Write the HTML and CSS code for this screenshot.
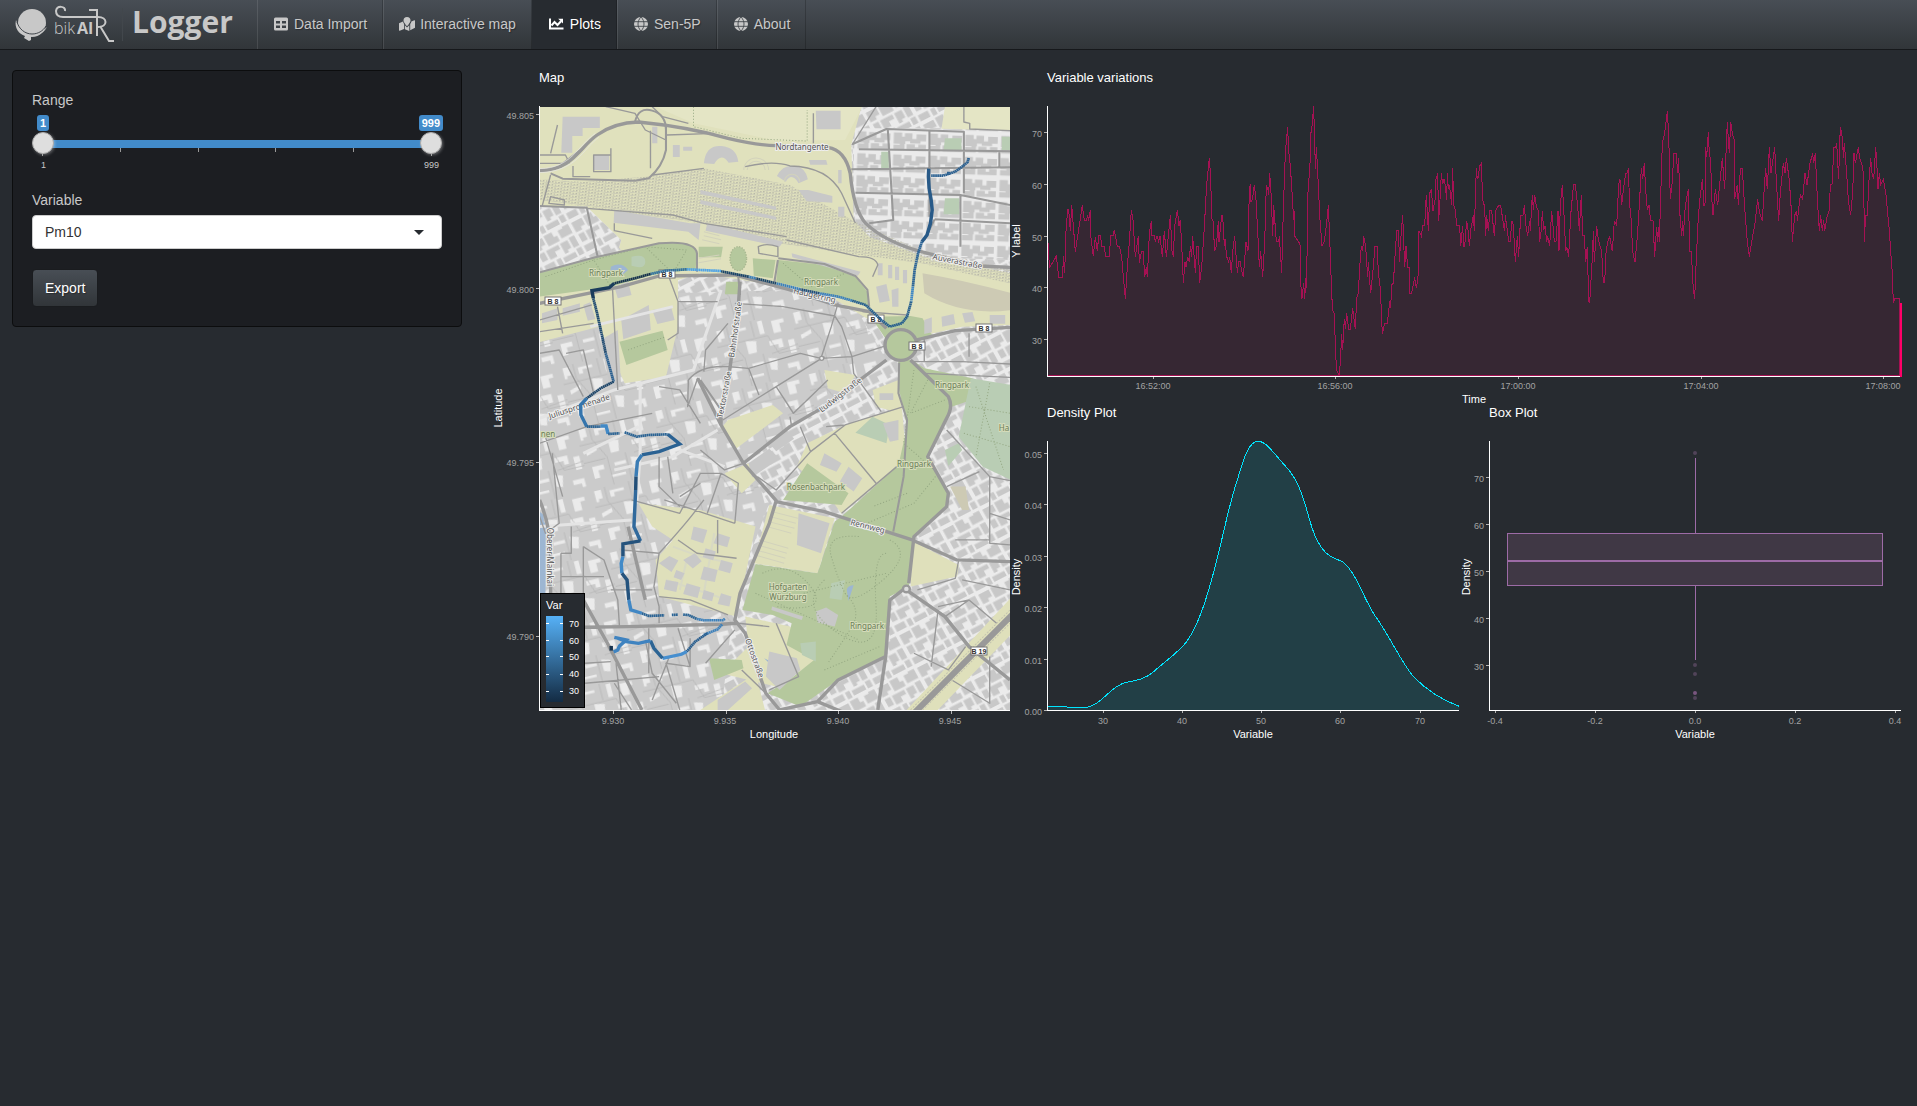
FILE: index.html
```html
<!DOCTYPE html>
<html lang="en">
<head>
<meta charset="utf-8">
<meta name="viewport" content="width=device-width, initial-scale=1">
<title>bikAIR Logger</title>
<link rel="stylesheet" href="styles.css">
</head>
<body>
<header class="navbar">
  <a class="brand" href="#">
    <svg class="brand-logo" width="124" height="49" viewBox="0 0 124 49" role="img" aria-label="bikAIR">
      <circle cx="32" cy="23" r="14" fill="#c8c8c8"/>
      <path d="M16 20c-2 8 3 14 9 16l-1 2 5 3 2-1v-4c7 0 13-3 16-9-5 5-10 7-15 6-8-1-14-6-16-13z" fill="#c8c8c8"/>
      <path d="M17 22c2 7 8 12 15 12 6 0 11-3 14-8" fill="none" stroke="#41464c" stroke-width="1"/>
      <path d="M65 11c1-5-8-6-9 0 0 4 3 6 7 6h35c10 0 10 10 0 10h-1M100 26l9 15h5" fill="none" stroke="#c8c8c8" stroke-width="2"/>
      <path d="M89 10h8v26" fill="none" stroke="#c8c8c8" stroke-width="2"/>
      <text class="logo-thin" x="54" y="34">bik</text>
      <text class="logo-bold" x="77" y="34">AI</text>
      <path d="M122.500 8v33" stroke="#42474c"/>
    </svg>
    <span class="brand-name">Logger</span>
  </a>
  <nav class="nav" aria-label="Main">
    <a href="#"><svg width="16" height="14" viewBox="0 0 16 14"><path fill="currentColor" fill-rule="evenodd" d="M2.500.500h11a1.500 1.500 0 0 1 1.500 1.500v10a1.500 1.500 0 0 1-1.500 1.500h-11A1.500 1.500 0 0 1 1 12V2A1.500 1.500 0 0 1 2.500.500zM3 4v2.500h4V4zM9 4v2.500h4V4zM3 8.500V11h4V8.500zM9 8.500V11h4V8.500z"/></svg>Data Import</a>
    <a href="#"><svg width="16" height="14" viewBox="0 0 16 14"><path fill="currentColor" d="M8 0a3.500 3.500 0 0 0-3.500 3.500C4.500 5.200 7 8.200 8 9.200c1-1 3.500-4 3.500-5.700A3.500 3.500 0 0 0 8 0zM0 6.200 4 4.500c.2 1 .7 2 1.100 2.600V12L.7 13.800 0 13.500zM5.900 8.300 8 10.500l2.300-2.300V14L5.900 12.200zM11.200 7c.7-1 1.100-1.700 1.200-2.500L15.300 3.200l.7.300v7.300l-4.800 2.500z"/></svg>Interactive map</a>
    <a class="active" href="#" aria-current="page"><svg width="17" height="14" viewBox="0 0 17 14"><path fill="none" stroke="currentColor" stroke-width="2" d="M2 1.500v10h13.500"/><path fill="none" stroke="currentColor" stroke-width="2" d="M3.500 8.500 6.500 5l3 3L13 4.200"/><path fill="currentColor" d="M10.200 1.800h4.800v4.800z"/></svg>Plots</a>
    <a href="#"><svg width="16" height="14" viewBox="0 0 16 14"><circle cx="8" cy="7" r="7" fill="currentColor"/><path fill="none" stroke="#40454a" stroke-width=".9" d="M1 4.700h14M1 9.300h14M8 0c-4 4-4 10 0 14M8 0c4 4 4 10 0 14"/></svg>Sen-5P</a>
    <a href="#"><svg width="16" height="14" viewBox="0 0 16 14"><circle cx="8" cy="7" r="7" fill="currentColor"/><path fill="none" stroke="#40454a" stroke-width=".9" d="M1 4.700h14M1 9.300h14M8 0c-4 4-4 10 0 14M8 0c4 4 4 10 0 14"/></svg>About</a>
  </nav>
</header>

<main class="page">
  <form class="panel">
    <label for="range-from">Range</label>
    <div class="slider">
      <div class="bubbles"><output for="range-from">1</output><output for="range-to">999</output></div>
      <div class="rail">
        <input id="range-from" type="range" min="1" max="999" value="1">
        <input id="range-to" type="range" min="1" max="999" value="999" aria-label="Range end">
      </div>
      <div class="ticks"><i></i><i></i><i></i><i></i><i></i><i></i></div>
      <div class="limits"><span>1</span><span>999</span></div>
    </div>
    <label for="variable">Variable</label>
    <div class="select">
      <select id="variable"><option>Pm10</option></select>
    </div>
    <button class="btn" type="button">Export</button>
  </form>

  <section class="plots">
    <figure class="plot map">
      <figcaption>Map</figcaption>
      <svg viewBox="0 0 528 659">
        <defs>
          <clipPath id="frame"><rect x="56" y="21" width="470" height="603"/></clipPath>
          <linearGradient id="ramp" x1="0" y1="0" x2="0" y2="1"><stop offset="0" stop-color="#56b1f7"/><stop offset="1" stop-color="#132b43"/></linearGradient>
          <pattern id="houses" width="130" height="110" patternUnits="userSpaceOnUse" patternTransform="rotate(-28)">
            <path fill="#c8c8c8" d="M4,6h34v22h-14v10h-20z M44,4h26v16h10v18h-36z M88,8h16v-4h20v30h-36z M6,46h18v26h-18z M30,46h40v14h-18v16h-22z M76,46h24v26h-12v8h-12z M106,42h18v34h-18z M4,84h32v20h-32z M44,84h14v22h-14z M64,88h40v16h-40z M110,82h16v22h-16z"/>
          </pattern>
          <pattern id="grid" width="104" height="66" patternUnits="userSpaceOnUse" patternTransform="translate(1092 274) rotate(2)">
            <path fill="#c8c8c8" d="M4,5h24v12h8v-10h22v16h12v-14h28v20h-16v8h-30v-6h-14v8h-34z M4,42h18v-6h14v22h-32z M42,40h24v8h10v-8h22v18h-56z"/>
          </pattern>
          <pattern id="dense" width="230" height="190" patternUnits="userSpaceOnUse" patternTransform="rotate(-14)">
            <rect width="230" height="190" fill="#cbcbcb"/>
            <path fill="#ebebeb" d="M8,6h20v26h-12v8h-8z M52,14h42v8h-30v12h-12z M130,6h14v40h-14z M170,14h36v12h-14v26h-22z M14,76l32,-10v12l-32,10z M84,56l30,6 -6,34h-24z M150,72h38v26h-14v-12h-24z M204,82h18v40h-18z M20,124h34v14h-18v22h-16z M86,126h34v10h-34z M136,120l26,8 -8,34 -18,-6z M70,160h42v8h-42z M186,150h34v26h-10v-12h-24z"/>
            <path fill="none" stroke="#b4b4b4" stroke-width="2" d="M0,54h150l20,60h60M40,0v44l30,60v86M112,0v50M0,108h64M124,104v86M150,110L230,100"/>
          </pattern>
          <pattern id="tracks" width="9" height="9" patternUnits="userSpaceOnUse" patternTransform="rotate(7)">
            <path stroke="#b2b2a6" stroke-width="3" stroke-dasharray="5 4" d="M0,4h9"/>
            <path stroke="#c5c5b4" stroke-width="2" d="M0,8h9"/>
          </pattern>
        </defs>
        <g clip-path="url(#frame)">
          <g class="land" transform="translate(-4 -26) scale(.3444 .3333)">
            <path fill="#ebebeb" d="M160,130H1545V1960H160z"/>
            <path fill="url(#houses)" d="M160,130H1545V1960H160z"/>
            <path fill="#ebebeb" d="M1080,205H1545V600L1290,590 1090,500z"/>
            <path fill="url(#grid)" d="M1080,205H1545V600L1290,590 1090,500z"/>
            <path fill="url(#dense)" d="M160,780L560,700 900,690 1100,760 1180,900 900,1100 765,1210 840,1330 740,1600 700,1960H160z"/>
            <path fill="#e0e1bd" d="M160,130H1110L1078,255 1085,480 1130,530 1290,590 1545,640V795L1400,800 1270,830 1180,810 1000,700 640,640 575,660 575,800 540,950 420,970 390,900 345,800 160,850V640L410,570 330,480 310,440H160z"/>
            <path fill="#e4e5c5" d="M510,140H1110L1060,240 860,242 620,190z M1350,140H1545V212L1340,206z"/>
            <path fill="#ebebeb" d="M160,440H310L410,540 400,575 160,640z"/><path fill="url(#houses)" d="M160,440H310L410,540 400,575 160,640z"/>
            <path fill="#dfe0bb" d="M720,1080L850,1035 880,1060 745,1165 700,1105z M460,1330L640,1350 800,1400 745,1670 520,1610 510,1500 560,1440 500,1400z M950,1150L1060,1095 1225,1040 1238,1200 1050,1362 1000,1290 920,1220z M840,1335L1030,1375 980,1540 795,1510z M1000,930L1090,945 1060,1000 1010,985z M1140,990L1215,960 1225,1060 1150,1040z M1258,1445L1390,1515 1385,1550 1250,1580z M770,1670L900,1700 980,1800 860,1880 700,1840 780,1760z M640,1950L800,1840 830,1960z M1230,1960L1545,1610V1720L1320,1960z M710,1240L780,1210 800,1260 760,1300z M160,1340L185,1400V1600H160z"/>
            <path fill="#cdcab4" d="M1285,640Q1400,660 1545,700V750Q1400,770 1290,700z M1365,1280h45l10,70h-20z"/>
            <path fill="#b5c89d" d="M160,640L335,590 520,550Q620,545 630,575L626,628 500,645 380,680 160,712z M635,560h70l-5,32h-65z M792,595l66,5 -8,55 -55,-8z M866,600L1000,615 1090,650 1128,700 1130,740 1060,715 860,665z M715,665h36v38h-40z M1135,770L1250,768 1285,775 1312,825 1265,850 1180,840z M405,845L530,812 545,870 425,915z M1215,900L1255,900 1290,925 1430,955 1412,1025 1370,1040 1300,1190 1360,1300 1355,1335 1260,1430 1255,1500 1245,1580 1190,1610 1178,1790 1040,1860 930,1940 835,1900 910,1850 970,1800 890,1755 905,1690 850,1665 762,1650 800,1512 980,1540 1030,1385 1050,1370 1215,1215 1240,1100 1215,980z M950,1210L1070,1300 1050,1335 880,1320z M665,1795L760,1800 765,1825 680,1860z"/>
            <ellipse cx="750" cy="596" rx="24" ry="36" fill="#b5c89d" stroke="#a8b790" stroke-width="4" stroke-dasharray="4 4"/>
            <path fill="#b9cdb4" d="M1425,955L1545,975V1262L1460,1220 1390,1130z M1140,1070L1190,1095 1180,1150 1090,1118z M1350,235h48v38h-52z M1350,415h42v48h-46z M1165,275h22v50h-22z M1515,230h30v40h-30z M440,590q40,-10 40,15t-40,12z M1350,1170l40,-20 10,20 -40,48z M1020,1570l40,-10 -10,60 -35,-5z M930,1750l45,-5v60l-40,-20z"/>
            <path fill="#9db6d2" d="M160,1388H190V1600H160z M380,620q30,-16 50,10l-20,18q-10,-20 -32,-10z M1065,1590q0,-12 20,-15l-15,48z M825,1795l50,25 -25,0z M160,1345l25,20v25h-25z"/>
            <path fill="url(#tracks)" d="M173,358L300,366 500,348 650,325 900,375 1080,480 1280,570 1545,630V672L1280,610 850,548 640,490 173,420z"/>
            <path fill="#c8c8c8" d="M240,170h108v34h-50v24h-30v50h-32z M390,450L610,490 640,490 635,540 605,515 388,488z M650,310Q655,255 700,258 745,262 750,305L722,308Q700,275 680,312z M862,348Q880,312 915,318 945,322 952,358L925,370Q905,335 888,365z M640,390L860,440V450L640,402z M640,420L860,470v10L640,432z M660,490L880,545 870,560 655,512z M925,390h28l70,18v20l-75,-5z M975,152h72v56h-70z M905,580l200,55 -8,12 -190,-55z M410,780l80,-45 6,75 -80,28z M500,750l55,-10 10,40 -50,12z M350,840l50,-30 10,170 -35,-10z M848,1640l90,30 -4,10 -88,-30z M975,1655l30,-12 35,22 -10,35 -50,-12z M840,1775l80,20 10,35 -60,60 -40,-40z M925,1360l90,30 -25,90 -70,-25z M690,1920l80,-55 20,20 -70,65h-30z M390,680l40,-15 10,40 -40,10z"/>
            <path fill="#c8c8c8" d="M180,760l45,-15v35l-45,10z M240,745l50,-15v25l-50,12z M300,735l20,-8 15,50 -22,5z M1290,780l22,-8v45l-22,5z M1340,770l35,-8 5,30 -38,8z M1400,760l30,-4 8,28 -30,4z M1480,765h45v26h-45z M1150,680l30,-8 10,50 -30,6z M1195,690l20,-6v56h-18z M1000,1180l50,30 -15,25 -48,-20z M1070,1220l40,35 -25,40 -40,-30z M1160,1000h40v20h-40z M1170,1090l45,-10v60l-25,5z M500,200h15v50h-15z M330,285h45v45h-45z M560,255h20v36h-20z M590,260h26v12h-26z M955,300h50l4,14h-50z M1040,330h10v40h-10z M1040,440h18v30h-18z M1155,610h14v36h-14z M1185,615h12v40h-12z M1205,620h12v40h-12z M1228,630h12v40h-12z"/>
            <path fill="none" stroke="#d2d2bc" stroke-width="3" d="M848,1355l75,20M842,1370l75,20M838,1385l75,20M834,1400l70,20M810,1440l85,25M806,1455l85,25M802,1470l85,25M798,1485l85,25M776,330a26,26 0 0 1 52,0M766,330a36,36 0 0 1 72,0M884,365a22,22 0 0 1 44,0M650,515l45,12M650,527l50,12M645,539l50,12M635,595l60,-10M635,608l65,-12"/>
            <path fill="none" stroke="#d8d9c4" stroke-width="6" d="M560,1460l80,30 90,20M600,1500l-20,90M680,1420l-30,180M540,1560l180,60"/>
            <path fill="#c8c8c8" d="M520,1510l30,-22 26,14 -20,34zM590,1500l34,-20 20,24 -26,22zM540,1560l36,6 -6,30 -36,-8zM650,1520l40,10 -8,36 -42,-8zM600,1570l40,12 -8,32 -42,-12zM690,1420l36,12 -8,30 -40,-12zM700,1600l30,10 -6,30 -34,-8zM620,1400l40,10 -12,40 -36,-12zM570,1530l24,10 -10,20 -22,-8zM655,1465l30,10 -8,26 -30,-10zM700,1500l34,10 -8,30 -34,-10zM650,1590l30,10 -6,24 -30,-8zM780,1210l60,-44 30,30 -80,56zM840,1150l50,-40 22,26 -52,38z"/>
            <path class="footway" d="M190,650L330,600 380,680M330,600L480,560 560,640M480,560L600,570 560,640M880,610L960,680 1060,640M1260,930L1230,1150 1330,1240 1260,1330 1100,1400M1300,960L1250,1060 1350,1020M1240,1300L1140,1340M1100,1430Q1000,1420 1020,1490T1060,1600 1170,1560 1190,1440M1000,1560Q920,1640 1040,1720T1150,1640 1180,1480M820,1540Q900,1500 960,1580T860,1640M1060,1600Q1110,1650 1080,1700T1010,1810M940,1600L1180,1540M800,1600L1100,1740M430,870L540,830M1440,980L1520,1230M1420,1040L1539,1060M1405,1120L1539,1160M1480,970L1440,1190M620,140V200L760,235 950,243V150M1000,1830L1160,1760"/>
            <path class="street pale" d="M173,1075L390,990 620,930 700,690M465,970V1180L455,1330M390,1230L560,1190 690,1110M580,1170L710,1220M320,800L560,740M173,1400L440,1380M300,1180L460,1100"/>
            <path class="street" d="M173,285h75l12,25M205,280L225,195M173,310L240,310 290,270M270,318V350h50M205,345L180,440M495,212V325M502,345L650,325M543,225L680,220M365,140L450,160 480,210 540,240M500,140L530,170 605,190M968,250V160M1080,255L1150,140M1405,140V186L1422,190V207L1539,212M380,265V335H330V285H380M770,320Q850,300 900,318 1010,320 1050,400L1090,490M205,410L245,420V435L200,430zM310,445L560,465 650,490 890,530M890,540L1100,590Q1150,590 1155,615L1140,650M390,490V512L500,535M808,560Q830,548 865,560V590L810,580z"/>
            <path class="street" d="M550,655L575,725H690M575,725V820L545,840M173,815L330,790M225,740L240,820M173,780L325,735M740,730L880,740 1030,768 1050,800 1080,890 1200,850M1040,728L1020,800 990,895 1080,890M650,935L655,870 720,790M605,960Q640,915 720,920L780,925 930,880 990,895M780,925L810,1005M705,1080L860,980 1000,890M860,980L910,1060 1010,960M605,960L603,1040 632,955 660,990M520,980L580,990 640,1090M173,1150L310,1100 500,1060M190,1130L240,1310M300,1010L230,870 173,880M250,880L300,870 330,1000M385,690L400,990M1080,890L1085,940 1165,1055M930,1100L960,1175M900,1070L905,1100M1005,1100L1060,1095 1230,1040M1030,1120L1150,1270M960,1175L860,1290 805,1250M1060,1095L960,1175M1050,1360L1210,1220M1110,755L1240,765M1290,830L1290,905M1250,905L1400,905 1539,912M1290,940L1539,952M1420,820V890M1355,1110L1480,1250 1539,1262M1355,1280L1450,1235M1480,1250V1360L1539,1380M1480,1360V1450L1539,1455M1480,1440H1380M1270,1590L1380,1555 1390,1500M1400,1560L1539,1590M1330,1640L1420,1620 1350,1670M1420,1620L1500,1690M1260,1780L1360,1830 1410,1760M1330,1650L1310,1820M1370,1860L1480,1930V1790M170,1360L190,1420 230,1390 210,1180M235,1480V1620H173M300,1460L360,1500 400,1620 405,1700M235,1480H265V1400M300,1460V1640M235,1550H360M380,1590H500M410,1470L520,1480 505,1580 520,1640 520,1690M520,1480Q590,1400 620,1360M575,1440L630,1480 745,1495M690,1380V1480M520,1610L610,1620 720,1665M650,1320L620,1360M535,1320L740,1390M440,1320L580,1360 640,1240 700,1240 660,1360M580,1310L640,1270M700,1240L750,1270 740,1390M520,1190V1280L580,1340M640,1170L710,1230 765,1210M545,1190L560,1300M305,1810L380,1805M490,1705V1840M305,1870L520,1850M395,1810L410,1950M575,1705L610,1820 540,1810 580,1950M480,1740L500,1840 570,1930M390,1870L440,1950M550,1790L500,1920M610,1735V1820M655,1810L740,1710M760,1830L830,1900M860,1690L925,1850 840,1890M750,1690L840,1700"/>
            <path class="road" d="M1082,252L1180,207 1405,215V400M1100,268L1539,274M1078,328L1539,322M1090,398L1395,405 1539,435M1305,210V470M1184,207L1200,480 1130,490M1395,405V560M1320,478L1539,490M1508,275v50M1320,478L1290,540M540,200V270Q530,320 490,355L450,362 240,356 205,340M450,186Q460,140 500,152T540,210M173,637L335,592 520,550Q625,540 630,580V635M173,438L310,443 342,592M865,600L855,665M866,595L1000,612 1090,648 1125,690 1130,740M755,705L750,650M700,1050L640,960M1217,908L1215,1000 1240,1080 1230,1250 1200,1415M1450,618L1539,622"/>
            <path class="road wide" d="M173,332C270,330 290,260 340,225Q390,188 460,186 600,200 720,235 800,255 860,257L1010,262Q1060,270 1075,340 1085,450 1120,490 1180,550 1300,580L1450,618 1539,622M173,730L410,680 520,648 740,645 900,690 1030,735 1130,755 1180,805M755,665L750,740 725,930 700,1050V1095M632,955L700,1095 765,1210 860,1322 840,1390 755,1600 740,1680 770,1720 830,1900 870,1950M860,1325L1000,1355 1255,1440 1385,1500 1539,1505M765,1210L900,1100 1000,1040 1180,900M1268,840L1380,812 1539,802M1250,900L1360,1010Q1375,1040 1355,1075L1300,1190 1360,1300 1355,1340 1260,1430 1245,1570M1240,1580L1190,1620 1178,1790 1040,1860 980,1925 870,1950M1245,1595L1350,1670 1420,1760 1539,1860M300,1702L430,1700 700,1693 745,1690M300,1620L370,1750 470,1950M173,1320Q205,1400 205,1480V1620M430,1400L480,1620M980,1925L1050,1955M1178,1790L1155,1950"/>
            <path fill="none" stroke="#e6e6e6" stroke-width="2" d="M173,326C265,325 285,255 335,220M173,338C280,335 300,265 345,232"/>
            <path fill="none" stroke="#999" stroke-width="18" d="M1260,1960L1545,1665"/><path fill="none" stroke="#c4c4b0" stroke-width="3" stroke-dasharray="6 4" d="M1250,1950L1539,1650M1285,1950L1539,1690"/>
            <circle cx="1222" cy="855" r="46" fill="#b5c89d" stroke="#999" stroke-width="10"/>
            <circle cx="1238" cy="1587" r="10" fill="#ddd" stroke="#999" stroke-width="7"/>
            <circle cx="992" cy="895" r="6" fill="#eee" stroke="#999" stroke-width="4"/>
          </g>
          <g class="names">
            <text class="park" x="122" y="190">Ringpark</text><text class="park" x="337" y="199">Ringpark</text>
            <text class="park" x="468" y="302">Ringpark</text><text class="park" x="430" y="381">Ringpark</text>
            <text class="park" x="332" y="404">Rosenbachpark</text><text class="park" x="304" y="504">Hofgarten</text>
            <text class="park" x="304" y="514">Würzburg</text><text class="park" x="383" y="543">Ringpark</text>
            <text class="park" x="64" y="351">nen</text><text class="park" x="520" y="345">Ha</text>
            <text x="318" y="64">Nordtangente</text>
            <text transform="translate(473 178) rotate(11)">Auverastraße</text>
            <text transform="translate(330 212) rotate(13)">Haugerring</text>
            <text transform="translate(254 244) rotate(-82)">Bahnhofstraße</text>
            <text transform="translate(243 309) rotate(-79)">Textorstraße</text>
            <text transform="translate(358 311) rotate(-38)">Ludwigstraße</text>
            <text transform="translate(96 323) rotate(-18)">Juliuspromenade</text>
            <text transform="translate(383 443) rotate(14)">Rennweg</text>
            <text transform="translate(268 573) rotate(70)">Ottostraße</text>
            <text transform="translate(63 471) rotate(90)">Oberer Mainkai</text>
          </g>
          <g class="shield">
            <rect x="61" y="211" width="16" height="8"/><text x="69" y="218">B 8</text>
            <rect x="175" y="184" width="16" height="8"/><text x="183" y="191">B 8</text>
            <rect x="384" y="229" width="16" height="8"/><text x="392" y="236">B 8</text>
            <rect x="492" y="238" width="16" height="8"/><text x="500" y="245">B 8</text>
            <rect x="425" y="256" width="16" height="8"/><text x="433" y="263">B 8</text>
            <rect x="487" y="561" width="16" height="8"/><text x="495" y="568">B 19</text>
          </g>
          <g class="ride" transform="translate(-4 -26) scale(.3444 .3333)">
            <path stroke="#2c6191" d="M1419,294L1416,306 1400,320 1380,335 1345,347 1310,347M1360,335V345"/>
            <path class="thick" stroke="#285a88" d="M1303,326L1302,350 1304,385 1310,420 1313,450 1308,490 1298,525 1283,545"/>
            <path stroke="#2d6597" d="M1283,545L1272,580 1262,630 1257,680"/>
            <path stroke="#3f87c4" d="M1257,680L1252,725"/>
            <path stroke="#28608f" d="M1252,725L1240,770 1225,790 1190,800 1165,780 1150,765 1120,735 1080,722"/>
            <path stroke="#3a7fba" d="M1080,722L1040,710 985,700"/><path stroke="#234f78" d="M985,700L930,688"/>
            <path stroke="#3a7fba" d="M930,688L860,670"/><path stroke="#1d4569" d="M860,670L800,655"/>
            <path stroke="#3a7fba" d="M800,655L780,650"/><path stroke="#1d4569" d="M780,650L700,634"/>
            <path stroke="#4fa3e6" d="M700,633L600,628"/>
            <path stroke="#34739f" stroke-dasharray="6 8" d="M600,628L540,632 495,642"/>
            <path stroke="#16324d" stroke-dasharray="10 4" d="M495,642L450,655 390,670"/>
            <path class="thick" stroke="#1a3c5c" d="M390,670L375,683 325,692 329,715"/>
            <path stroke="#1f4a70" d="M329,715L340,760 355,830 365,880"/>
            <path stroke="#2a5f8f" d="M365,880L380,935 388,965"/><path stroke="#1d4569" d="M388,965L350,985 310,1015"/>
            <path class="thick" stroke="#3575ad" d="M310,1015L292,1035 293,1065 310,1100"/>
            <path stroke="#2c6494" d="M310,1100L350,1100"/><path class="thick" stroke="#4289c6" d="M350,1098L366,1098 372,1122"/>
            <path stroke="#2c6494" stroke-dasharray="14 5" d="M372,1122L405,1120M420,1117L455,1130 490,1125 545,1123"/>
            <path class="thick" stroke="#2b6293" d="M545,1123L580,1152 520,1175 470,1185"/>
            <path class="thick" stroke="#3a7cb5" d="M470,1185L457,1205 453,1250"/>
            <path class="thick" stroke="#234f78" d="M453,1250L452,1290"/><path class="thick" stroke="#30699c" d="M452,1290L447,1400 466,1443"/>
            <path class="thick" stroke="#25537d" d="M466,1443L415,1452 415,1490"/><path class="thick" stroke="#418ac8" d="M415,1490L410,1510 412,1540"/>
            <path class="thick" stroke="#25537d" d="M412,1540L427,1560 432,1620"/><path class="thick" stroke="#4187c4" d="M432,1620L438,1650 470,1660"/>
            <path stroke="#2c6494" stroke-dasharray="16 6" d="M470,1660L490,1668 535,1666M557,1665L575,1664M590,1664L605,1665 630,1677"/>
            <path stroke="#3d80ba" d="M630,1677L650,1681 705,1681 712,1676M703,1693L690,1708 650,1725"/>
            <path stroke="#2a5f8f" d="M660,1720L625,1745 600,1775"/><path class="thick" stroke="#478fcf" d="M600,1775L585,1783 530,1795"/>
            <path class="thick" stroke="#2c6494" d="M530,1795L505,1765 495,1742"/>
            <path class="thick" stroke="#3f83c0" d="M495,1742L460,1750 425,1745 400,1735M390,1732L425,1740 405,1758 400,1770 388,1776"/>
            <path class="thick" stroke="#17334f" d="M381,1758L381,1772"/>
          </g>
          <rect x="56.500" y="507.500" width="44" height="114" fill="#272b30" stroke="#000"/>
          <text class="lab start" x="62" y="523">Var</text>
          <rect x="62" y="530" width="17" height="86" fill="url(#ramp)"/>
          <path stroke="#fff" d="M62,537.500h3m11,0h3M62,554.500h3m11,0h3M62,570.500h3m11,0h3M62,588.500h3m11,0h3M62,605.500h3m11,0h3"/>
          <g class="key"><text x="85" y="541">70</text><text x="85" y="558">60</text><text x="85" y="574">50</text><text x="85" y="591">40</text><text x="85" y="608">30</text></g>
        </g>
        <path class="axis" d="M55.500,20V624.500H526"/>
        <path class="tick" d="M52,28.500h3M52,202.500h3M52,376.500h3M52,550.500h3M129.500,625v3M242.500,625v3M354.500,625v3M467.500,625v3"/>
        <g class="num end"><text x="50" y="33">49.805</text><text x="50" y="207">49.800</text><text x="50" y="380">49.795</text><text x="50" y="554">49.790</text></g>
        <g class="num"><text x="129" y="638">9.930</text><text x="241" y="638">9.935</text><text x="354" y="638">9.940</text><text x="466" y="638">9.945</text></g>
        <text class="lab" x="290" y="652">Longitude</text>
        <text class="lab" transform="translate(18 322) rotate(-90)">Latitude</text>
      </svg>
    </figure>

    <figure class="plot series">
      <figcaption>Variable variations</figcaption>
      <svg viewBox="0 0 893 319">
        <g class="trace" transform="translate(-2 -26) scale(.33333)">
          <path d="M1320,948 H113 V550 L115,550 118,622 128,608 139,588 146,652 158,652 160,588 163,638 166,590 168,515 173,450 176,450 181,512 185,436 190,497 196,575 205,515 217,436 223,482 229,482 233,466 236,482 241,450 243,535 250,588 256,530 262,574 266,528 272,528 275,559 283,559 287,590 298,590 302,528 309,528 313,510 322,559 328,559 335,590 339,640 346,716 352,620 358,545 364,450 369,480 376,590 385,528 388,608 395,574 400,574 404,652 409,620 412,652 418,522 424,482 426,528 433,528 436,545 441,528 446,545 450,528 457,590 463,512 469,590 475,528 481,466 486,574 490,590 494,497 502,450 507,497 511,480 516,574 520,668 525,606 528,622 533,590 538,606 541,559 545,590 548,528 556,638 560,559 565,559 569,668 575,622 583,500 590,374 598,295 602,350 605,474 609,482 614,574 619,559 625,482 627,545 635,466 638,466 643,559 645,536 650,590 656,606 659,590 664,638 668,574 674,528 682,638 686,606 691,606 693,622 700,652 708,545 714,574 718,388 721,373 723,425 727,419 733,374 738,420 743,512 748,622 752,574 758,652 764,550 769,374 774,390 776,405 779,340 784,412 788,528 791,436 795,490 799,545 806,545 808,528 815,638 820,450 826,279 830,232 833,202 836,272 841,318 847,411 851,480 854,452 854,528 864,543 870,552 872,670 876,716 881,668 884,716 888,655 890,684 893,411 900,310 903,218 908,186 910,138 913,195 916,326 919,262 922,312 925,380 930,480 936,559 943,543 949,497 955,436 960,559 965,700 968,752 973,761 977,884 980,932 988,947 991,905 995,823 998,870 1002,792 1004,778 1006,808 1010,760 1016,808 1021,808 1028,745 1036,808 1040,714 1045,700 1049,622 1054,559 1058,574 1061,528 1067,559 1073,652 1075,606 1082,700 1090,620 1095,559 1102,559 1105,640 1111,684 1117,823 1123,792 1132,792 1139,724 1142,745 1145,675 1150,670 1154,606 1160,512 1166,512 1168,606 1173,528 1178,466 1184,622 1188,559 1193,622 1198,622 1199,700 1205,700 1214,652 1219,684 1224,652 1227,512 1234,528 1238,497 1244,497 1249,404 1255,512 1259,400 1264,388 1269,452 1275,420 1278,358 1283,340 1286,482 1291,404 1294,340 1298,372 1302,358 1306,375 1310,419 1312,340 1315,388 1319,375 1320,390"/>
          <path transform="translate(1320 0)" d="M0,390 L5,436 8,325 11,436 16,450 20,497 29,497 32,559 38,497 41,559 44,559 50,482 55,515 58,559 63,505 70,466 73,512 79,325 82,357 85,350 89,318 94,310 98,420 104,440 107,528 110,466 115,512 120,450 125,452 133,528 138,450 146,436 152,436 161,497 164,512 166,466 172,512 176,545 181,545 185,482 190,495 196,606 202,528 206,590 212,466 219,466 223,436 228,497 233,528 239,482 241,512 247,404 250,450 254,404 259,440 265,452 269,545 274,510 277,452 281,510 285,497 290,545 293,528 299,559 305,452 313,545 318,545 324,452 327,574 331,436 337,374 343,482 347,574 350,560 356,590 362,466 368,400 371,374 376,374 383,436 388,512 394,404 398,528 403,528 407,606 412,560 416,722 419,730 423,660 428,574 430,512 433,606 440,497 445,540 455,574 460,668 464,668 468,580 473,545 479,530 482,545 487,574 493,482 500,497 506,374 510,358 515,436 521,382 527,340 531,340 536,325 538,436 542,452 548,574 555,606 562,530 568,436 574,325 578,358 583,310 587,388 592,450 597,436 602,482 609,482 614,590 620,500 623,545 625,500 628,545 633,380 637,248 644,220 652,153 656,222 661,418 666,372 672,280 679,280 683,340 686,295 690,466 695,528 698,482 700,528 706,436 715,388 719,574 724,574 730,690 734,716 737,640 745,468 751,405 757,358 762,436 765,436 767,262 770,290 775,217 778,280 782,300 785,412 789,466 796,388 803,436 809,372 817,295 824,388 829,255 832,186 836,255 838,280 842,186 847,220 853,240 854,418 862,374 865,436 870,345 873,325 877,325 884,444 892,545 898,590 905,545 915,490 923,418 928,455 937,482 943,380 947,325 952,388 958,262 963,340 974,262 979,360 986,482 991,400 1000,310 1005,340 1009,295 1018,360 1024,450 1027,545 1031,500 1034,466 1040,452 1042,482 1051,405 1058,418 1065,340 1071,374 1080,310 1088,280 1091,310 1096,280 1100,372 1104,450 1108,512 1112,466 1117,512 1121,480 1124,512 1132,466 1138,452 1141,374 1147,372 1151,262 1157,262 1160,248 1166,358 1169,240 1172,202 1178,240 1180,295 1183,248 1190,340 1195,420 1202,466 1208,400 1212,280 1216,310 1225,262 1229,295 1235,310 1240,340 1244,545 1246,466 1252,466 1257,360 1262,295 1266,340 1271,358 1277,262 1280,300 1284,388 1288,340 1292,374 1300,358 1308,404 1313,460 1318,510 1322,574 1327,640 1330,730 1334,716 1348,716 1350,748 V948 H0"/>
        </g>
        <path class="axis" d="M35.500,20V290.500H889"/>
        <rect x="888" y="217" width="2" height="74" fill="#ff0068"/>
        <path class="tick" d="M32,46.500h3M32,98.500h3M32,150.500h3M32,201.500h3M32,253.500h3M141.500,291v2M323.500,291v2M506.500,291v2M689.500,291v2M871.500,291v2"/>
        <g class="num end"><text x="30" y="51">70</text><text x="30" y="103">60</text><text x="30" y="155">50</text><text x="30" y="206">40</text><text x="30" y="258">30</text></g>
        <g class="num"><text x="141" y="303">16:52:00</text><text x="323" y="303">16:56:00</text><text x="506" y="303">17:00:00</text><text x="689" y="303">17:04:00</text><text x="871" y="303">17:08:00</text></g>
        <text class="lab" x="462" y="317">Time</text>
        <text class="lab" transform="translate(8 155) rotate(-90)">Y label</text>
      </svg>
    </figure>

    <figure class="plot density">
      <figcaption>Density Plot</figcaption>
      <svg viewBox="0 0 449 324">
        <g transform="translate(-2 -31) scale(.33333)">
          <path class="curve-area" d="M113,961V950C150,948 190,954 230,952C275,945 300,890 345,878C380,870 400,870 430,846C460,818 505,788 530,755C565,705 590,630 620,512C640,435 655,350 685,260C705,190 720,154 745,154C770,154 790,190 835,238C885,300 890,380 915,437C945,505 970,500 1000,517C1040,550 1060,625 1095,677C1140,740 1170,810 1210,860C1250,900 1290,928 1348,949V961z"/>
          <path class="curve" d="M113,950C150,948 190,954 230,952C275,945 300,890 345,878C380,870 400,870 430,846C460,818 505,788 530,755C565,705 590,630 620,512C640,435 655,350 685,260C705,190 720,154 745,154C770,154 790,190 835,238C885,300 890,380 915,437C945,505 970,500 1000,517C1040,550 1060,625 1095,677C1140,740 1170,810 1210,860C1250,900 1290,928 1348,949"/>
        </g>
        <path class="axis" d="M35.500,20V289.500H447"/>
        <path class="tick" d="M32,32.500h3M32,83.500h3M32,135.500h3M32,186.500h3M32,238.500h3M32,289.500h3M91.500,290v2M170.500,290v2M249.500,290v2M328.500,290v2M408.500,290v2"/>
        <g class="num end"><text x="30" y="37">0.05</text><text x="30" y="88">0.04</text><text x="30" y="140">0.03</text><text x="30" y="191">0.02</text><text x="30" y="243">0.01</text><text x="30" y="294">0.00</text></g>
        <g class="num"><text x="91" y="303">30</text><text x="170" y="303">40</text><text x="249" y="303">50</text><text x="328" y="303">60</text><text x="408" y="303">70</text></g>
        <text class="lab" x="241" y="317">Variable</text>
        <text class="lab" transform="translate(8 156) rotate(-90)">Density</text>
      </svg>
    </figure>

    <figure class="plot box">
      <figcaption>Box Plot</figcaption>
      <svg viewBox="0 0 444 324">
        <g class="boxes">
          <rect x="46.500" y="112.500" width="375" height="52"/>
          <path stroke-width="2" d="M46,140H422"/>
          <path d="M234.500,37V112M234.500,165V239"/>
        </g>
        <g class="outliers"><circle cx="234" cy="32" r="2"/><circle cx="234" cy="244" r="2"/><circle cx="234" cy="253" r="2"/><circle class="double" cx="234" cy="272" r="2"/><circle cx="234" cy="277" r="2"/></g>
        <path class="axis" d="M28.500,20V289.500H440"/>
        <path class="tick" d="M25,56.500h3M25,103.500h3M25,150.500h3M25,197.500h3M25,244.500h3M34.500,290v2M134.500,290v2M234.500,290v2M334.500,290v2M434.500,290v2"/>
        <g class="num end"><text x="23" y="61">70</text><text x="23" y="108">60</text><text x="23" y="155">50</text><text x="23" y="202">40</text><text x="23" y="249">30</text></g>
        <g class="num"><text x="34" y="303">-0.4</text><text x="134" y="303">-0.2</text><text x="234" y="303">0.0</text><text x="334" y="303">0.2</text><text x="434" y="303">0.4</text></g>
        <text class="lab" x="234" y="317">Variable</text>
        <text class="lab" transform="translate(9 156) rotate(-90)">Density</text>
      </svg>
    </figure>
  </section>
</main>
</body>
</html>
```
FILE: styles.css
```css
* { box-sizing: border-box; }

body {
  margin: 0;
  min-height: 100vh;
  background: #272b30;
  color: #c8c8c8;
  font: 14px/20px "Liberation Sans", Arial, sans-serif;
}

/* Top bar */
.navbar {
  display: flex;
  height: 50px;
  background: linear-gradient(#484e55, #3a3f44 60%, #313539);
  border-bottom: 1px solid #16181b;
  text-shadow: 1px 1px 1px rgba(0, 0, 0, .3);
}
.brand {
  display: flex;
  width: 257px;
  color: #c8c8c8;
  text-decoration: none;
}
.brand-logo { flex: none; }
.brand-name {
  padding-left: 8px;
  font: 700 30px/44px "Open Sans", sans-serif;
  text-shadow: none;
}
.logo-thin { font: 300 16px "Open Sans", sans-serif; fill: #c8c8c8; text-shadow: none; }
.logo-bold { font: 700 16px "Open Sans", sans-serif; fill: #c8c8c8; text-shadow: none; }
.nav { display: flex; }
.nav a {
  display: flex;
  align-items: center;
  gap: 5px;
  padding: 0 15px 2px;
  border-left: 1px solid rgba(255, 255, 255, .1);
  border-right: 1px solid rgba(0, 0, 0, .2);
  color: #c8c8c8;
  text-decoration: none;
}
.nav a.active { background: #272b30; border-left-color: transparent; color: #fff; }

/* Page */
.page {
  display: grid;
  grid-template-columns: 450fr 1421fr;
  gap: 22px;
  align-items: start;
  padding: 20px 12px;
}
.panel {
  padding: 19px;
  background: #1c1e22;
  border: 1px solid #0c0d0e;
  border-radius: 4px;
}
.panel label { display: block; margin-bottom: 5px; }

/* Range slider */
.slider { height: 60px; margin-bottom: 15px; }
.bubbles, .ticks, .limits { display: flex; justify-content: space-between; }
.bubbles { padding-left: 5px; margin-right: -1px; }
.bubbles output {
  padding: 0 3px;
  background: #428bca;
  border-radius: 3px;
  color: #fff;
  font-size: 11px;
  font-weight: 700;
  line-height: 16px;
}
.rail {
  position: relative;
  height: 8px;
  margin: 9px 11px 0;
  background: #428bca;
}
.rail input {
  position: absolute;
  top: -8px;
  left: -11px;
  width: calc(100% + 22px);
  height: 22px;
  margin: 0;
  background: none;
  appearance: none;
  pointer-events: none;
}
.rail input::-webkit-slider-thumb {
  width: 22px;
  height: 22px;
  background: #dedede;
  border: 1px solid #ababab;
  border-radius: 50%;
  box-shadow: 1px 1px 3px rgba(255, 255, 255, .3);
  appearance: none;
  pointer-events: auto;
}
.ticks { padding: 0 10px; }
.ticks i { width: 1px; height: 4px; background: #999; }
.ticks i:first-child, .ticks i:last-child { height: 8px; }
.limits { padding: 0 3px 0 9px; font-size: 9px; line-height: 18px; }

/* Form controls */
.select { position: relative; margin-bottom: 20px; }
.select::after {
  content: "";
  position: absolute;
  top: 15px;
  right: 18px;
  border: 5px solid transparent;
  border-top-color: #272b30;
  border-bottom: 0;
  pointer-events: none;
}
.select select {
  display: block;
  width: 100%;
  height: 34px;
  padding: 0 12px;
  background: #fff;
  border: 1px solid #ccc;
  border-radius: 4px;
  color: #333;
  font: inherit;
  appearance: none;
}
.btn {
  display: block;
  height: 38px;
  padding: 0 12px;
  background: linear-gradient(#484e55, #3a3f44 60%, #313539);
  border: 1px solid #1a1c1f;
  border-radius: 4px;
  color: #fff;
  font: inherit;
  text-shadow: 1px 1px 1px rgba(0, 0, 0, .3);
}

/* Plots */
.plots {
  display: grid;
  grid-template-columns: 528fr 449fr 444fr;
  grid-template-areas: "map series series" "map density box";
  align-items: start;
}
.map { grid-area: map; }
.series { grid-area: series; }
.density { grid-area: density; }
.box { grid-area: box; }
.plot { margin: 0; min-width: 0; }
.plot figcaption { padding-left: 35px; color: #fff; font-size: 13px; line-height: 16px; }
.map figcaption { padding-left: 55px; }
.box figcaption { padding-left: 28px; }
.plot svg { display: block; width: 100%; height: auto; overflow: visible; }

.axis { fill: none; stroke: #fff; shape-rendering: crispEdges; }
.tick { stroke: #b3b3b3; shape-rendering: crispEdges; }
.num text { fill: #a3a3a3; font-size: 9px; text-anchor: middle; }
.num.end text { text-anchor: end; }
.key text { fill: #fff; font-size: 9px; }
.lab { fill: #fff; font-size: 11px; text-anchor: middle; }
.start { text-anchor: start; }

.trace path {
  fill: rgba(255, 0, 104, .07);
  stroke: #a51153;
  vector-effect: non-scaling-stroke;
  shape-rendering: crispEdges;
}
.curve-area { fill: rgba(0, 229, 255, .11); }
.curve { fill: none; stroke: #00e5ff; vector-effect: non-scaling-stroke; shape-rendering: crispEdges; }
.boxes { fill: #403845; stroke: #9d6ba6; shape-rendering: crispEdges; }
.outliers { fill: #514459; }
.outliers .double { fill: #79567f; }

/* Base map */
.street, .road { fill: none; stroke: #999; stroke-linejoin: round; }
.street { stroke-width: 4; }
.pale { stroke: #e4e4e4; stroke-width: 9; }
.road { stroke-width: 6; }
.wide { stroke-width: 10; }
.footway { fill: none; stroke: #94a782; stroke-width: 3; stroke-dasharray: 3 6; }
.names text {
  fill: #555;
  stroke: #eee;
  stroke-width: 2px;
  paint-order: stroke;
  font-family: "Noto Sans", sans-serif;
  font-size: 8px;
  text-anchor: middle;
}
.names .park { fill: #6b7c58; stroke: #d5dcba; }
.shield rect { fill: #fff; stroke: #777; }
.shield text { fill: #333; font-size: 7px; font-weight: 700; text-anchor: middle; }
.ride path { fill: none; stroke-width: 8; stroke-dasharray: 5 1; }
.ride .thick { stroke-width: 10; stroke-dasharray: none; }
```
